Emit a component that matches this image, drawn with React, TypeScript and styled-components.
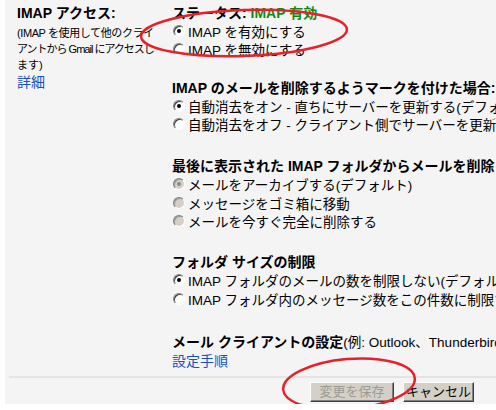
import React from 'react';
import styled, { createGlobalStyle } from 'styled-components';

const GlobalStyle = createGlobalStyle`
  html, body {
    margin: 0;
    padding: 0;
    background: #ffffff;
    overflow: hidden;
  }
  body {
    font-family: "Liberation Sans", "Noto Sans CJK JP", sans-serif;
    color: #000;
  }
`;

const Page = styled.div`
  padding-left: 5px;
  height: 410px;
  background: #fff;
`;

const Panel = styled.div`
  position: relative;
  background: #f4f4f4;
  height: 404px;
  overflow: hidden;
`;

const Settings = styled.div`
  display: grid;
  grid-template-columns: 155px minmax(0, 1fr);
  padding: 4px 0 0 12px;
`;

const LabelCol = styled.div`
  display: flex;
  flex-direction: column;
`;

const LabelTitle = styled.div`
  font-size: 14px;
  font-weight: bold;
  line-height: 19px;
`;

const Hint = styled.div`
  font-size: 11px;
  line-height: 16px;
  margin-top: 2px;
  white-space: nowrap;
`;

const HintLine = styled.div<{ $tight?: number }>`
  letter-spacing: ${p => p.$tight ?? 0}px;
`;

const Link = styled.a`
  color: #1a4fc4;
  font-size: 14px;
  line-height: 18px;
  text-decoration: none;
  cursor: pointer;
`;

const Options = styled.div`
  white-space: nowrap;
`;

const Section = styled.div<{ $gap: number }>`
  margin-top: ${p => p.$gap}px;
`;

const SectionTitle = styled.div`
  font-size: 14px;
  font-weight: bold;
  line-height: 18px;
`;

const Enabled = styled.span`
  color: #128a12;
`;

const Row = styled.label<{ $h?: number }>`
  display: flex;
  align-items: center;
  gap: 3px;
  font-size: 13.5px;
  height: ${p => p.$h ?? 18}px;
`;

const Radio = styled.input.attrs({ type: 'radio' })`
  appearance: none;
  margin: 0 0 0 1px;
  width: 12px;
  height: 12px;
  border-radius: 50%;
  border: 1px solid;
  border-color: #808080 #ffffff #ffffff #808080;
  box-shadow: inset 1px 1px 0 #404040;
  background: #fff;
  position: relative;
  flex: none;
  &:checked::after {
    content: '';
    position: absolute;
    left: 3px;
    top: 3px;
    width: 4px;
    height: 4px;
    border-radius: 50%;
    background: #000;
  }
  &:disabled {
    background: #d4d0c8;
    box-shadow: inset 1px 1px 0 #9a9a9a;
  }
  &:disabled:checked::after {
    background: #8a8a8a;
  }
`;

const Plain = styled.span`
  font-weight: normal;
  font-size: 13.5px;
`;

const Footer = styled.div`
  margin: 6px 0 0 4px;
  border-top: 2px solid #e4e4e4;
  display: flex;
  justify-content: flex-end;
  gap: 9px;
  padding: 4px 22px 0 0;
`;

const Button = styled.button<{ $w: number }>`
  width: ${p => p.$w}px;
  height: 20px;
  padding: 0;
  font-family: "Liberation Sans", "Noto Sans CJK JP", sans-serif;
  font-size: 13px;
  line-height: 16px;
  color: #000;
  background: #d4d0c8;
  border: 1px solid;
  border-color: #ffffff #404040 #404040 #ffffff;
  box-shadow: inset -1px -1px 0 #808080;
  &:disabled {
    color: #9c9a94;
  }
`;

const Marks = styled.svg`
  position: absolute;
  left: -5px;
  top: 0;
  pointer-events: none;
`;

type Opt = { label: string; checked?: boolean; disabled?: boolean };

const RadioGroup: React.FC<{ name: string; options: Opt[]; h?: number }> = ({ name, options, h }) => (
  <>
    {options.map((o, i) => (
      <Row key={i} $h={h}>
        <Radio name={name} defaultChecked={o.checked} disabled={o.disabled} />
        {o.label}
      </Row>
    ))}
  </>
);

export default function App() {
  return (
    <Page>
      <GlobalStyle />
      <Panel>
        <Settings>
          <LabelCol>
            <LabelTitle>IMAP アクセス:</LabelTitle>
            <Hint>
              <HintLine $tight={-0.4}>(IMAP を使用して他のクライ</HintLine>
              <HintLine $tight={-1}>アントから Gmail にアクセスし</HintLine>
              <HintLine>ます)</HintLine>
            </Hint>
            <Link>詳細</Link>
          </LabelCol>
          <Options>
            <SectionTitle>
              ステータス: <Enabled>IMAP 有効</Enabled>
            </SectionTitle>
            <RadioGroup
              name="imap"
              options={[{ label: 'IMAP を有効にする', checked: true }, { label: 'IMAP を無効にする' }]}
            />
            <Section $gap={21}>
              <SectionTitle>IMAP のメールを削除するようマークを付けた場合:</SectionTitle>
              <RadioGroup
                name="expunge"
                options={[
                  { label: '自動消去をオン - 直ちにサーバーを更新する(デフォルト)', checked: true },
                  { label: '自動消去をオフ - クライアント側でサーバーを更新するまで待つ' },
                ]}
              />
            </Section>
            <Section $gap={24}>
              <SectionTitle>最後に表示された IMAP フォルダからメールを削除したときの動作:</SectionTitle>
              <RadioGroup
                name="deleted"
                h={18.5}
                options={[
                  { label: 'メールをアーカイブする(デフォルト)', checked: true, disabled: true },
                  { label: 'メッセージをゴミ箱に移動', disabled: true },
                  { label: 'メールを今すぐ完全に削除する', disabled: true },
                ]}
              />
            </Section>
            <Section $gap={22}>
              <SectionTitle>フォルダ サイズの制限</SectionTitle>
              <RadioGroup
                name="limit"
                h={19}
                options={[
                  { label: 'IMAP フォルダのメールの数を制限しない(デフォルト)', checked: true },
                  { label: 'IMAP フォルダ内のメッセージ数をこの件数に制限する' },
                ]}
              />
            </Section>
            <Section $gap={24}>
              <SectionTitle>
                メール クライアントの設定<Plain>(例: Outlook、Thunderbird、iPhone)</Plain>
              </SectionTitle>
              <Link>設定手順</Link>
            </Section>
          </Options>
        </Settings>
        <Footer>
          <Button $w={84} disabled>変更を保存</Button>
          <Button $w={71}>キャンセル</Button>
        </Footer>
        <Marks width="496" height="410" viewBox="0 0 496 410">
          <ellipse cx="244" cy="33" rx="103" ry="23" transform="rotate(-2 244 33)" fill="none" stroke="#e8202a" strokeWidth="2.5" />
          <ellipse cx="349" cy="384" rx="66" ry="25" transform="rotate(-5 349 384)" fill="none" stroke="#e8202a" strokeWidth="2.5" />
        </Marks>
      </Panel>
    </Page>
  );
}
